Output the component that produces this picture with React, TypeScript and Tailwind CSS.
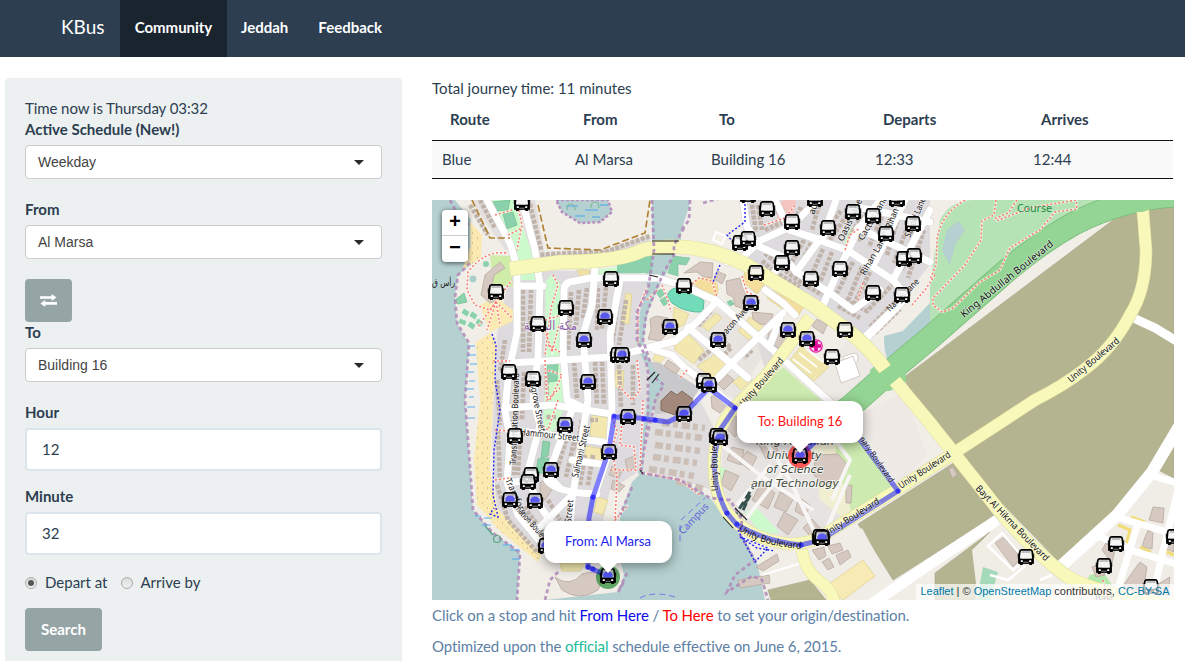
import React from "react";

type Stop = [number, number, number?];

const stops: Stop[] = [
  [522, 203], [496, 292], [611, 279], [566, 308], [538, 324], [605, 317, 1], [584, 340, 1],
  [618, 355], [622, 355, 1], [509, 372], [533, 379], [588, 382, 1], [628, 417, 1], [684, 414, 1],
  [565, 425, 1], [515, 436], [551, 470, 1], [531, 475], [528, 482], [510, 500, 1], [535, 501, 1],
  [609, 452, 1], [546, 546, 1], [608, 576, 1], [684, 286], [670, 327, 1], [718, 340, 1], [751, 303, 1],
  [756, 273], [704, 381], [709, 385, 1], [767, 209], [792, 222], [792, 248], [782, 263], [740, 243],
  [748, 239], [748, 195], [815, 199], [828, 228], [811, 279], [840, 269], [853, 212], [873, 216],
  [886, 234], [897, 199], [913, 224], [904, 259], [914, 256], [873, 293], [902, 295], [788, 330, 1],
  [807, 339, 1], [845, 330], [832, 357], [717, 436], [720, 438, 1], [800, 456, 1], [820, 537],
  [822, 538, 1], [1026, 557], [1116, 544], [1104, 566], [1174, 537], [1151, 587],
];

const whiteRoads = [
  "M487 200L510 243L517 267L517 333L509 370L505 410L510 440L507 482L518 515L552 556",
  "M522 200L535 250L540 285L538 357L533 400L540 425L527 475L537 502L558 532",
  "M517 286H543", "M563 350L564 290Q564 282 575 281L590 278L657 278L684 286L717 301L763 341L830 402",
  "M563 350L567 400L588 410", "M595 268L592 305L583 335L588 400L580 450L572 500L569 550",
  "M620 280L610 335L612 410L609 452L595 494", "M510 363L610 357L640 350L675 341L697 322L715 303",
  "M505 408L553 405L612 414", "M513 430L603 442", "M547 480Q556 493 597 494", "M508 483L530 480",
  "M570 497L537 530", "M572 410L548 475L560 488", "M688 327L748 378",
  "M655 350L672 355L684 367L712 388L735 408", "M783 313L735 360L697 400",
  "M600 464L572 460", "M765 290L783 303L795 315", "M770 345L780 320",
  "M743 200L747 227L760 247L783 257L797 272L830 293L853 310L880 290",
  "M757 242L790 227L813 205", "M790 230L847 250L893 280L907 297L863 342", "M823 305L840 267L858 230L880 200",
  "M758 243L742 258L727 262", "M783 258L770 280", "M857 207L930 222", "M858 228L930 262", "M930 210L893 280", "M905 200L875 262",
  "M775 200L790 230", "M867 335L903 300", "M790 230L822 240L836 200", "M796 272L818 242",
];

const houses = [
  "M523 290L523 352", "M531 289L529 352", "M571 292L568 350", "M579 290L576 325", "M587 288L583 318",
  "M598 288L597 330", "M606 287L602 330", "M546 370L547 395", "M574 362L577 398", "M595 362L597 405",
  "M602 362L604 405", "M516 378L517 420", "M524 372L522 420", "M497 380L500 425", "M498 430L500 480", "M497 485L508 520L538 553",
  "M515 445L514 475", "M520 440L518 475", "M556 417L545 417", "M566 440L557 470", "M574 442L566 477",
  "M582 420L577 450", "M590 420L598 420", "M585 455L580 485", "M593 455L588 485", "M524 507L545 535",
  "M518 505L522 515L536 533", "M548 500L560 520", "M470 205L488 235", "M480 200L495 228",
  "M530 204L541 250", "M535 255L570 253L605 252L650 236", "M618 300L612 345", "M626 300L619 345", "M619 365L621 408", "M633 365L633 405",
  "M505 340L500 372",
  "M770 213L785 210", "M765 230L785 221", "M801 207L795 219", "M804 240L792 262", "M811 243L801 264",
  "M823 249L808 283", "M832 252L818 287", "M845 258L829 288", "M853 262L837 293", "M862 267L848 300",
  "M870 272L854 304", "M847 215L830 240", "M841 211L822 235", "M862 215L849 238", "M870 218L858 242",
  "M884 212L869 247", "M893 212L878 252", "M899 215L887 255", "M908 225L894 263", "M916 228L902 270",
  "M924 230L908 278", "M765 253L777 264L800 282L822 295", "M762 261L775 272L800 287", "M838 306L860 318",
  "M845 300L867 311L895 282", "M870 327L895 302", "M875 333L900 309", "M758 205L762 230", "M752 205L756 232", "M819 205L812 230",
  "M711 311L698 326", "M714 347L699 360", "M752 350L744 358", "M729 312L740 321", "M723 341L731 348L722 357",
];

const campusBlocks = [
  "M655 432L702 438", "M655 445L700 451", "M653 457L697 463", "M649 469L694 476", "M662 423L705 428", "M676 481L703 489",
];

const parcels: { d: string; c: string }[] = [
  { d: "M716 313L722 318L708 331L702 326Z", c: "#f3e9b0" },
  { d: "M718 353L731 364L712 378L697 366Z", c: "#f3e9b0" },
  { d: "M675 335L688 334L704 350L694 364L675 350Z", c: "#f3e9b0" },
  { d: "M744 372L752 380L741 390L733 382Z", c: "#f3e9b0" },
  { d: "M592 415L610 418L607 440L590 437Z", c: "#f3e9b0" },
  { d: "M586 446L604 449L600 464L584 461Z", c: "#f3e9b0" },
  { d: "M626 293L632 294L629 324L621 324Z", c: "#f3e9b0" },
  { d: "M616 370L624 371L623 388L614 387Z", c: "#f3e9b0" },
  { d: "M597 497L608 500L603 515L594 512Z", c: "#f3e9b0" },
  { d: "M577 270L590 270L588 279L580 276Z", c: "#f3e0a5" },
  { d: "M746 263L767 282L757 294L743 282Z", c: "#f5dd9c" },
  { d: "M693 283Q698 276 710 278Q721 283 717 295L712 298Z", c: "#f5dd9c" },
  { d: "M674 307L689 314L684 325L672 330Z", c: "#f3e9b0" },
  { d: "M772 290L803 307L797 319L767 298Z", c: "#f5dd9c" },
  { d: "M656 351L667 355L660 363L653 360Z", c: "#f3e9b0" },
  { d: "M801 346L829 367L814 381L789 361Z", c: "#f0e6ad" },
  { d: "M750 317L764 327L749 340L738 331Z", c: "#f3e9b0" },
  { d: "M863 560L875 576L843 600L826 586Z", c: "#f8eab5" },
  { d: "M560 563H585L580 571H562Z", c: "#f3e9b0" },
];

const buildings = [
  "M684 273L700 262L713 263L712 278L702 276L697 272Z", "M726 281L740 278L742 287L748 299L744 309L735 306L733 297L727 294Z",
  "M717 271L726 275L722 284L714 279Z", "M752 312L773 314L770 325L760 324L753 319Z", "M817 319L827 325L823 334L812 326Z",
  "M650 319L656 316L668 318L671 330L660 341L648 339L651 330Z",
  "M500 262L485 275L481 295L490 303L496 301L491 290L494 275L505 268Z",
  "M768 330L783 330L789 340L778 348L768 341Z", "M540 483L551 476L555 485L545 500L540 497Z",
  "M711 397L721 392L729 402L720 413L712 408Z", "M735 416L745 424L735 437L726 428Z", "M747 419L757 426L752 436L743 430Z",
  "M732 447L744 450L741 465L727 460Z", "M747 451L757 457L750 470L739 462Z", "M758 443L770 438L778 450L766 459Z",
  "M725 470L739 476L731 491L721 484Z", "M761 483L775 493L768 509L752 500Z", "M780 492L794 498L786 512L774 507Z",
  "M784 512L798 520L788 535L777 526Z", "M799 497L811 506L804 516L795 511Z", "M803 528L812 519L820 528L812 538Z",
  "M815 455L838 454L849 467L839 482L823 485L814 475Z", "M846 486L852 485L851 503L846 503Z",
  "M812 550L824 547L826 556L819 560ZM828 546L840 543L843 550L832 554ZM836 555L848 550L851 557L840 565ZM822 562L829 558L834 567L828 570Z",
  "M756 567L777 554L779 561L763 571Z", "M738 580L769 575L770 583L740 588Z",
  "M555 577Q570 588 582 574Q597 569 604 578L598 590Q580 602 562 590Z",
  "M995 543L1004 537L1021 558L1013 567Z", "M1149 520L1153 507L1164 508L1163 523Z", "M1144 540L1148 530L1153 533L1152 549L1142 547Z",
  "M1125 583L1134 570L1140 562L1147 567L1142 600H1121Z", "M1102 550L1107 541L1116 546L1112 563Z", "M1092 567L1100 564L1105 575L1096 577Z",
  "M1160 583L1170 577L1168 595H1157Z", "M1163 538H1174V552L1161 547Z", "M949 469L953 467L957 475L952 478Z",
  "M625 460L636 455L634 468L628 472Z", "M612 466L622 471L619 478L609 475Z", "M613 480L625 486L619 492L611 489Z",
  "M668 360L680 368L676 374L664 366Z", "M727 374L734 380L724 390L718 384Z",
];

const redDots = [
  "M506 253Q485 250 468 272L467 290L475 305L490 310L512 280", "M496 302L477 328", "M496 302L487 330", "M496 302L500 325", "M496 302L512 318",
  "M518 206L522 225L517 250", "M495 215L512 210", "M508 235L522 228", "M553 275L558 285L551 308L545 355", "M545 320L562 315",
  "M545 330L552 352L559 325", "M548 345L560 352", "M545 360L547 400L560 388", "M550 400L562 375L548 370", "M558 400L548 430L542 425",
  "M646 290L638 310L638 343", "M662 285L668 300L671 312", "M657 290L647 300", "M637 360L640 390L632 400L618 385",
  "M493 361L510 361", "M495 430L535 432", "M495 480L509 478", "M612 418L617 430L612 450L617 478", "M622 422L620 445L634 447L636 470L611 470",
  "M643 400L640 470", "M643 473L680 480L700 495", "M617 480L615 520L628 505", "M692 284L699 278L712 281L717 297",
  "M742 276L747 292L760 298", "M764 225L785 218L795 205", "M845 250L850 235L860 228", "M863 283L858 300", "M687 370L680 378",
  "M965 200Q940 215 937 240L936 265L930 280", "M996 200L994 215L982 221L981 240L965 265L933 298L933 305L942 312L953 308L980 282L1000 270L1010 248L1040 230L1055 212L1077 209L1076 200L1030 208L996 221",
  "M1017 200L1008 213L994 219", "M1103 580L1108 600", "M935 275L925 290L912 305",
];

function Label({ x, y, a, w, s = 9.5, children }: { x: number; y: number; a: number; w: number; s?: number; children: string }) {
  return (
    <text
      transform={`translate(${x} ${y}) rotate(${a})`}
      fontSize={s}
      textLength={w}
      lengthAdjust="spacingAndGlyphs"
      fill="#111"
      stroke="#fff"
      strokeOpacity={0.45}
      strokeWidth={1.6}
      paintOrder="stroke"
    >
      {children}
    </text>
  );
}

function Bus({ x, y, blue }: { x: number; y: number; blue: boolean }) {
  return (
    <g transform={`translate(${x - 8} ${y - 8})`}>
      <path d="M3.2 1H12.8L14.5 9.5H1.5Z" fill={blue ? "#c9c9e8" : "#f4f4f4"} fillOpacity={blue ? 0.6 : 0.85} />
      <path d="M3.5 1.6H12.5V4H3.5Z" fill="#aaa" fillOpacity=".7" />
      {blue && <path d="M3.4 9.5V6.5Q4.6 3.4 8 3.4Q11.4 3.4 12.6 6.5V9.5Z" fill="#4444f5" fillOpacity=".85" />}
      <path d="M3.5 .9H12.5Q14 1 14.3 3L14.9 9V14H1.1V9L1.7 3Q2 1 3.5 .9Z" fill="none" stroke="#000" strokeWidth="1.7" />
      <path d="M.3 9.2Q8 10.2 15.7 9.2V14.5H14.1V16H11.2V14.5H4.8V16H1.9V14.5H.3Z" fill="#000" />
      <path d="M2.8 11.3H4.8V12.9H2.8ZM11.2 11.3H13.2V12.9H11.2Z" fill="#fff" />
      <path d="M5.4 13.2H10.6" stroke="#bbb" strokeWidth=".7" />
      <path d="M.3 4.5V9M15.7 4.5V9" stroke="#000" strokeWidth="1" />
    </g>
  );
}

function MapDrawing() {
  const unity = "M1142 200L1146 250Q1146 290 1130 315Q1113 348 1085 369Q1063 386 1035 400L957 451L898 489L827 533Q812 544 790 544Q754 540 733 519Q714 500 714 467Q714 428 735 407L765 377L810 317";
  const main = "M510 269L560 262Q620 262 643 250Q660 246 680 247Q710 248 745 264L813 305L847 330Q868 346 885 369";
  const mainEast = "M895 381L930 423L997 508Q1030 548 1065 575Q1090 592 1174 606";
  const trunk = "M1190 195Q1130 195 1075 223Q1035 245 995 281L930 338L887 374L850 407L830 420";
  const route = "M608 576L588 567L588 528L589 518L593 497L609 450L614 417L640 418L668 422L684 414L709 388L735 408L720 430L714 458Q714 490 727 513L737 525Q765 541 801 545L821 540L898 491L858 437L828 430L800 456";
  return (
    <svg viewBox="432 200 742 400" width="742" height="400" className="block" fontFamily="'Noto Sans', sans-serif">
      <defs>
        <pattern id="sand" width="10" height="10" patternUnits="userSpaceOnUse">
          <rect width="10" height="10" fill="#fbe9b2" />
          <path d="M2 3h1M7 8h1" stroke="#b8a06a" strokeWidth="1" />
        </pattern>
      </defs>
      <rect x="432" y="200" width="742" height="400" fill="#b5d0d0" />
      <path d="M455 200H652V248L640 300L643 350L655 400L641 473L632 482L622 510L615 540L624 575L618 592L545 600H517L520 553L493 533L473 510L470 467L465 400L469 345L457 323L455 295L458 275L470 265L471 220Z" fill="#f1eee8" />
      <path d="M676 240H700Q718 215 745 200H1174V600H765L757 562L745 540L727 520L710 498L680 480L641 473L655 400L643 345L650 290Z" fill="#f1eee8" />
      <path d="M691 200H745L744 230L727 258L681 244V232Z" fill="#f1eee8" />
      <path d="M497 335L510 270L640 272L650 290L640 310L645 345L655 400L641 470L610 490L594 560L552 562L497 512L492 440Z" fill="#dedbde" />
      <path d="M470 200H535L545 255L505 250Z" fill="#e4e0df" />
      <path d="M742 200H930V265L868 340L813 300L745 258Z" fill="#dedbde" />
      <path d="M643 400L700 400L715 430L712 490L680 480L641 473Z" fill="#dfdddd" />
      <path d="M648 361L660 363L700 388L684 412L655 414Z" fill="#c9c8ca" />
      <path d="M684 335L712 305L770 345L735 400L700 375Z" fill="#e8e5e0" />
      <path d="M758 345L783 322L800 340L765 370Z" fill="#e0dbdb" />
      <path d="M535 254L600 252L650 235V243L600 260L535 263Z" fill="#dedbde" />
      <path d="M470 222L482 235L481 258L462 270L471 245Z" fill="url(#sand)" />
      <path d="M476 342L490 333L497 345L493 400L490 470L497 508L541 555L538 562L500 531L477 505L474 460L480 400Z" fill="url(#sand)" />
      <path d="M480 305L496 297L514 311L513 321L490 332Z" fill="#fbe9b2" />
      <path d="M491 200H513L533 255L537 280H521L515 250Z" fill="#cdfacd" />
      <path d="M545 282L551 275L561 284L563 400L567 402L550 440L543 425L546 360Z" fill="#cdfacd" />
      <path d="M597 270L618 267L614 278H597Z" fill="#cdfacd" />
      <path d="M617 265L654 254L653 273L617 273Z" fill="#8bd1ab" />
      <path d="M490 255L510 256L513 287L493 285Z" fill="#cfeca8" />
      <path d="M492 202L510 200L508 210L497 211ZM503 214L513 212L517 225L507 229ZM547 364L558 363L557 381L548 382ZM543 441L550 442L548 456L541 458ZM538 459L549 458L545 474L536 472ZM455 300L464 293L467 302L458 304Z" fill="#8bd1ab" stroke="#70bd93" strokeWidth=".7" />
      <path d="M464 308l6 4-3 5-6-4zM472 311l6 4-3 5-6-4zM460 318l7 3-2 5-7-3zM470 321l6 4-3 5-6-4zM478 318l6 4-3 5-6-4z" fill="#8bd1ab" stroke="#fff" strokeWidth=".5" />
      <circle cx="486" cy="264" r="3" fill="#8bd1ab" />
      <circle cx="473" cy="279" r="3.4" fill="#a8cfc8" />
      <path d="M556 200H608L612 212L600 222L580 223L562 212Z" fill="#b5d0d0" stroke="#b78fc0" strokeWidth="2.5" strokeDasharray="3 2" />
      <path d="M566 206h12M585 210h13M575 216h10M592 217h8M600 205h8" stroke="#3aa0f0" strokeWidth=".9" />
      <path d="M567 210q0-6 4-6t4 6M591 208q0-6 4-6t4 6" fill="none" stroke="#7fb89b" strokeWidth="1.2" />
      <path d="M667 296Q669 288 680 287L692 291L704 301L703 312Q685 313 672 303Z" fill="#72dcba" stroke="#5bb999" />
      <path d="M673 256L690 258L686 265L678 264V276L668 273ZM656 292l5-3 4 5-5 4zM660 300l5-3 4 5-5 4zM727 302l4-2 3 4-4 2z" fill="#8bd1ab" stroke="#70bd93" strokeWidth=".6" />
      <path d="M760 238L770 233L771 238L763 243ZM852 302L860 301L857 306Z" fill="#cdf5cd" />
      <path d="M843 245L850 228L862 225L855 238Z" fill="#d6efc0" />
      <path d="M777 205L784 200H796L794 213L777 220Z" fill="#f5c5c0" />

      <path d="M930 335V285Q937 235 940 220Q950 200 975 200H1120L1050 235Z" fill="#b5e3b5" />
      <path d="M947 230L958 221L965 230L955 245L950 265L942 250Z" fill="#b4d0d0" />
      <path d="M884 336L903 331L930 303V338L905 362L890 361Q884 358 884 336Z" fill="#b5d0d0" />

      <path d="M722 425L745 408L810 425L848 448L851 515L825 530L790 540L750 528L722 500Z" fill="#e6e3e1" />
      <path d="M813 445L840 430L862 447L892 488L845 519L820 500Z" fill="#f1efd2" />
      <path d="M745 402L783 367L830 408L835 425L745 425Z" fill="#cdebb0" />
      <path d="M836 432L862 443L893 487L852 514L845 490L836 470Z" fill="#cdebb0" />
      <path d="M745 512L757 508L780 533L760 533ZM720 466L737 475L733 486L719 482Z" fill="#cdfacd" />
      <path d="M850 420L904 392L927 455L897 484Z" fill="#eee9e5" />
      <path d="M847 340L890 376L850 412L833 400L812 385Z" fill="#edeae6" />

      <g fill="#b5b491" stroke="#a8a68c" strokeWidth=".6">
        <path d="M903 378L1125 211L1174 207V432L1150 473L1117 517L1060 563L957 457Z" />
        <path d="M955 462L994 516L893 580L858 524Z" />
        <path d="M768 590L810 580L826 600H771Z" />
        <path d="M935 573L990 532L972 550L983 560L975 600H935Z" />
        <path d="M1158 470L1174 445V478Z" />
      </g>
      <path d="M862 528L890 580L862 597L830 600L810 560L835 545Z" fill="#f0ede7" />
      <path d="M972 550L996 528L1050 575L1048 600H978Z" fill="#f0ede5" />
      <path d="M1066 567L1117 521L1152 480L1174 483V600H1105L1078 582Z" fill="#f0ede6" />
      <path d="M983 567L998 572L990 600H977Z" fill="#8bd1ab" opacity=".75" />
      <path d="M1090 575L1103 572L1112 585L1108 600L1087 580Z" fill="#b5e8ac" />

      {parcels.map((p) => <path key={p.d} d={p.d} fill={p.c} stroke="#d9cb83" strokeWidth=".6" />)}
      <g fill="none" stroke="#c0b3aa" strokeWidth="4.6" strokeDasharray="4 1.4">
        {houses.map((d) => <path key={d} d={d} />)}
      </g>
      <g fill="none" stroke="#cbbfb8" strokeWidth="6.5" strokeDasharray="8 3 5 4">
        {campusBlocks.map((d) => <path key={d} d={d} />)}
      </g>
      <g fill="#d5c9c2" stroke="#b9aaa0" strokeWidth=".8">
        {buildings.map((d) => <path key={d} d={d} />)}
      </g>
      <path d="M661 401L671 391L677 395L682 391L694 400L685 412L675 415L661 410Z" fill="#a2897c" stroke="#83695d" />
      <g fill="none" stroke="#f8f6f4" strokeWidth="4" strokeLinejoin="round">
        <path d="M735 412L760 432L790 480L815 533M722 445L760 475L813 510M745 520L800 450L825 415M737 505L770 465M850 475L826 530M832 500L850 460L835 440M790 415L810 437" />
      </g>
      <path d="M806 349l17 13M799 353l18 14M793 359l18 14" stroke="#fff" strokeWidth="1.6" />
      <path d="M842 357L854 353Q860 354 857 363M835 363L853 356L860 376L841 383Z" fill="#fff" stroke="#cfcac5" strokeWidth="1" />
      <path d="M716 232l10 4-4 8-9-4z" fill="#f5f0e5" stroke="#fff" strokeWidth="2" />
      <path d="M733 519L753 487M738 521L750 495M743 505l8-9" stroke="#36524e" strokeWidth="3" strokeDasharray="8 4" />
      <path d="M988 546L1002 533L1025 560L1013 570ZM990 575L1008 580L1025 566M1040 580L1052 575" fill="none" stroke="#fff" strokeWidth="2.5" />
      <path d="M1118 525L1130 530L1126 545L1115 538M1131 517l14 5M1140 547l11 5M1160 549l14 6" fill="none" stroke="#f1dc78" strokeWidth="3" />
      <path d="M762 575L805 562M760 545L802 550" stroke="#fff" strokeWidth="2" />
      <path d="M652 200H680L676 250L667 272L657 290L648 312L643 342L650 362L665 385L656 397L652 410L646 430L642 474L638 474L643 430L648 400L650 372L642 358L636 342L640 312L648 290L652 272Z" fill="#b5d0d0" />

      <g fill="none" stroke="#d3d0d0" strokeWidth="8" strokeLinecap="round" strokeLinejoin="round">
        {whiteRoads.map((d) => <path key={d} d={d} />)}
      </g>
      <g fill="none" stroke="#fff" strokeWidth="7" strokeLinecap="round" strokeLinejoin="round">
        {whiteRoads.map((d) => <path key={d} d={d} />)}
      </g>
      <g fill="none" stroke="#fff">
        <path d="M860 612L930 564L997 520" strokeWidth="11" />
        <path d="M1180 425L1152 472L1117 515L1060 567" strokeWidth="12" />
        <path d="M1127 315L1155 328L1180 343" strokeWidth="9" />
        <path d="M1153 476L1180 484M1120 518L1180 536M1137 526L1113 605M1130 550L1180 565M1097 536L1130 548M1178 490L1162 555L1152 600" strokeWidth="7" />
      </g>
      <path d={trunk} fill="none" stroke="#78bb78" strokeWidth="24" />
      <path d="M870 370Q876 366 876 360L905 360Q906 372 906 382L890 391Q880 390 872 398Z" fill="#94d494" />
      <path d={trunk} fill="none" stroke="#94d494" strokeWidth="22.5" />
      <path d="M802 550Q805 570 818 580Q833 590 835 605" fill="none" stroke="#e3e1a5" strokeWidth="12" />
      <path d="M802 550Q805 570 818 580Q833 590 835 605" fill="none" stroke="#f8f8ba" strokeWidth="11" />
      <path d={unity} fill="none" stroke="#dddda0" strokeWidth="12.6" />
      <path d={main} fill="none" stroke="#dddda0" strokeWidth="14.6" />
      <path d={mainEast} fill="none" stroke="#dddda0" strokeWidth="13.6" />
      <path d={unity} fill="none" stroke="#f8f8ba" strokeWidth="11.4" />
      <path d={main} fill="none" stroke="#f8f8ba" strokeWidth="13.6" />
      <path d={mainEast} fill="none" stroke="#f8f8ba" strokeWidth="12.6" />
      <path d="M1125 200H1155Q1152 213 1137 212Q1128 212 1125 207Z" fill="#94d494" />

      <g fill="none" stroke="#fff" strokeWidth="2.6" strokeOpacity=".6">{redDots.map((d) => <path key={d} d={d} />)}</g>
      <g fill="none" stroke="#fb7a6b" strokeWidth="1.5" strokeDasharray="2 2">{redDots.map((d) => <path key={d} d={d} />)}</g>
      <path d="M472 200L490 238L510 238M538 205L548 248L600 250L645 233L650 200" fill="none" stroke="#ae8030" strokeWidth="1.6" strokeDasharray="7 3" />
      <g fill="none" stroke="#b08abb" strokeWidth="2.8" strokeDasharray="4 3" opacity=".85">
        <path d="M450 200L458 215L469 225M470 263L458 275L455 297L457 323L469 343L465 400L470 467L473 510L493 533L520 553L517 600" />
        <path d="M652 200L654 250L648 290L637 312L637 340L645 355L648 372L648 420L641 472" />
        <path d="M684 228L674 245L674 255L664 272L655 292L646 315L643 340L650 362" />
        <path d="M690 200L689 220L680 232M703 203L720 198M655 378L664 385L656 397L652 415L645 445" />
        <path d="M641 473L680 480L710 498L730 500L742 520L740 535L755 560L735 575L727 592L752 576L762 580L768 600" />
        <path d="M632 487L620 515M627 573L618 592L625 580M545 600L550 580L560 570" />
      </g>
      <g fill="none" stroke="#2222f5" strokeWidth="1.4" strokeDasharray="2 2">
        <path d="M492 334L496 345L495 380L500 410L494 450L493 495L498 517L490 514L494 508" />
        <path d="M745 200V222L727 235L733 242M720 265L713 282" />
        <path d="M738 530L755 562L768 548L740 537L757 548L775 551" />
      </g>
      <path d="M640 598Q655 590 678 598M681 520L705 498M680 525v20" fill="none" stroke="#7777e8" strokeWidth="1" strokeDasharray="6 4" />
      <g stroke="#45a5f0" strokeWidth=".9">
        <path d="M469 346h6M468 355h8M470 364h7M467 372h7M469 381h6M466 389h8M469 397h5M467 407h8M468 418h7M475 516h6M484 518h8M482 525h9M503 545h9M510 550h10M512 559h8" />
      </g>
      <path d="M647 380l8-8M652 383l7-9M652 241h27M652 254h22M649 275l9 2M723 517l10 11M735 508l12 12M640 470l3 4" stroke="#222" strokeWidth="1.1" />
      <g fill="none" stroke="#5ba583" strokeWidth="1.2">
        <circle cx="497" cy="539" r="3.5" /><path d="M485 526l8 9" />
      </g>

      <g fill="#8a5fa5" fontSize="13" fontFamily="'DejaVu Sans', sans-serif">
        <text x="524" y="330" textLength="53" lengthAdjust="spacingAndGlyphs" stroke="#fff" strokeOpacity=".6" strokeWidth="1.5" paintOrder="stroke">مكة المدينة</text>
      </g>
      <text x="432" y="286" fontSize="10" fill="#222" textLength="23" lengthAdjust="spacingAndGlyphs" fontFamily="'DejaVu Sans', sans-serif">رأس ق</text>
      <text x="1017" y="212" fontSize="11" fill="#268a48" textLength="35" lengthAdjust="spacingAndGlyphs">Course</text>
      <Label x={964} y={318} a={-39} w={116} s={10}>King Abdullah Boulevard</Label>
      <Label x={1071} y={383} a={-40} w={64}>Unity Boulevard</Label>
      <Label x={975} y={489} a={46} w={101}>Bayt Al Hikma Boulevard</Label>
      <Label x={901} y={489} a={-33} w={60}>Unity Boulevard</Label>
      <Label x={744} y={407} a={-49} w={61}>Unity Boulevard</Label>
      <Label x={721} y={341} a={-48} w={53}>Beacon Avenue</Label>
      <Label x={843} y={242} a={-65} w={46} s={9}>Oasis Lane</Label>
      <Label x={863} y={241} a={-60} w={50} s={9}>Cactus Lane</Label>
      <Label x={865} y={276} a={-60} w={46} s={9}>Rihan Lane</Label>
      <Label x={891} y={229} a={-68} w={40} s={9}>Rihan Lane</Label>
      <Label x={910} y={238} a={-68} w={42} s={9}>Sahool Lane</Label>
      <Label x={890} y={312} a={-45} w={42} s={9}>Nargis Lane</Label>
      <Label x={814} y={215} a={-70} w={22} s={9}>aurel</Label>
      <Label x={520} y={435} a={6} w={59}>Hammour Street</Label>
      <Label x={578} y={478} a={-77} w={53}>Salmani Street</Label>
      <Label x={571} y={523} a={-84} w={23} s={9}>Street</Label>
      <Label x={516} y={465} a={-88} w={92} s={9}>Transformation Boulevard</Label>
      <Label x={528} y={373} a={79} w={60} s={9}>Musgrove Street</Label>
      <Label x={505} y={480} a={65} w={42} s={9}>Transform</Label>
      <Label x={514} y={508} a={48} w={53} s={9}>mation Boulevard</Label>
      <text transform="translate(683 535) rotate(-47)" fontSize="10" fill="#6363d8">Campus</text>

      <g fontSize="11" fontStyle="italic" fill="#3f4a3b" textAnchor="middle" fontFamily="'DejaVu Sans', sans-serif" stroke="#fff" strokeOpacity=".65" strokeWidth="2" paintOrder="stroke">
        <text x="795" y="445" textLength="78" lengthAdjust="spacingAndGlyphs">King Abdullah</text>
        <text x="794" y="459" textLength="55" lengthAdjust="spacingAndGlyphs">University</text>
        <text x="795" y="473" textLength="57" lengthAdjust="spacingAndGlyphs">of Science</text>
        <text x="795" y="487" textLength="88" lengthAdjust="spacingAndGlyphs">and Technology</text>
      </g>
      <circle cx="816" cy="346" r="6.2" fill="#fbd5ef" stroke="#e0189c" strokeWidth="1.3" />
      <path d="M814.2 341h3.6v3.2h3.2v3.6h-3.2v3.2h-3.6v-3.2H811v-3.6h3.2z" fill="#df0c98" />

      <circle cx="608" cy="577" r="12" fill="#168020" fillOpacity=".65" />
      <circle cx="800" cy="456" r="12" fill="#f33" fillOpacity=".8" />
      <path d={route} fill="none" stroke="#00f" strokeOpacity=".5" strokeWidth="5" strokeLinejoin="round" strokeLinecap="round" />
      <g fill="#1515ff" fillOpacity=".7">
        {[[614, 416], [644, 419], [655, 420], [593, 497], [588, 567], [593, 569], [735, 408], [737, 524], [727, 513], [801, 545], [898, 491]].map(([x, y]) => <circle key={`${x}-${y}`} cx={x} cy={y} r="2.6" />)}
      </g>
      <Label x={718} y={491} a={-91} w={61}>Unity Boulevard</Label>
      <text fontSize="9.5" fill="#111"><textPath href="#unity-south" textLength="67" lengthAdjust="spacingAndGlyphs">Unity Boulevard</textPath></text>
      <path id="unity-south" d="M738 530Q762 547 805 549" fill="none" />
      <Label x={826} y={537} a={-32} w={64}>Unity Boulevard</Label>
      <Label x={859} y={439} a={55} w={54} s={8.5}>nary Boulevard</Label>
      {stops.map(([x, y, b], i) => <Bus key={i} x={x} y={y} blue={!!b} />)}
      <text x="1095" y="601" fontSize="9" fill="#555">Bayt</text>
    </svg>
  );
}

function Select({ value }: { value: string }) {
  return (
    <div className="flex h-[34px] items-center justify-between rounded border border-[#ccc] bg-white pl-3 pr-[17px] font-['Liberation_Sans',sans-serif] text-[14px] text-[#444]">
      <span>{value}</span>
      <svg width="10" height="5" viewBox="0 0 10 5"><path d="M0 0H10L5 5Z" fill="#2b2b2b" /></svg>
    </div>
  );
}

function Field({ label, value }: { label: string; value: string }) {
  return (
    <div className="mb-[15px]">
      <div className="mb-[5px] h-[21px] font-bold leading-[21px]">{label}</div>
      <div className="flex h-[43px] items-center rounded border-2 border-[#dce4ec] bg-white px-[15px]">{value}</div>
    </div>
  );
}

function Radio({ checked }: { checked?: boolean }) {
  return (
    <span className="flex h-3 w-3 items-center justify-center rounded-full border border-[#aaa] bg-gradient-to-b from-[#dcdcdc] to-[#f1f1f1]">
      {checked && <span className="h-[6px] w-[6px] rounded-full bg-[#555]" />}
    </span>
  );
}

function Popup({ text, className }: { text: string; className: string }) {
  return (
    <div className={`absolute flex h-[42px] items-center justify-center rounded-xl bg-white text-[13px] shadow-[0_3px_12px_rgba(0,0,0,0.4)] ${className}`}>
      {text}
      <svg className="absolute left-1/2 top-[41px] -ml-[10px]" width="20" height="12" viewBox="0 0 20 12"><path d="M0 0H20L10 11Z" fill="#fff" /></svg>
    </div>
  );
}

export default function App() {
  return (
    <div className="h-[661px] w-[1185px] overflow-hidden bg-white font-[Lato,sans-serif] text-[15px] text-[#2c3e50]">
      <nav className="flex h-[57px] items-center bg-[#2c3e50] pb-[3px] pl-[61px] font-bold text-white">
        <span className="w-[59px] text-[19px] font-normal">KBus</span>
        <span className="-mb-[3px] flex h-[57px] w-[107px] items-center justify-center bg-[#1a242f] pb-[3px] tracking-[-0.03px]">Community</span>
        <span className="pl-[14px]">Jeddah</span>
        <span className="pl-[30px]">Feedback</span>
      </nav>
      <div className="flex gap-[30px] pl-[5px] pt-[21px]">
        <aside className="h-[620px] w-[397px] rounded bg-[#ecf0f1] px-5 pt-5">
          <div className="h-[21px] leading-[21px] tracking-[-0.08px]">Time now is Thursday 03:32</div>
          <div className="mb-[5px] h-[21px] font-bold leading-[21px]">Active Schedule (New!)</div>
          <Select value="Weekday" />
          <div className="mb-[5px] mt-5 h-[21px] font-bold leading-[21px]">From</div>
          <Select value="Al Marsa" />
          <div className="mt-5 flex h-[43px] w-[47px] items-center justify-center rounded bg-[#95a5a6]">
            <svg width="17" height="13" viewBox="0 0 17 13" fill="#fff"><path d="M0 2.3H11.6V0L16.5 3.6L11.6 7V4.8H0ZM17 8.1H5.3V5.9L.4 9.4L5.3 13V10.7H17Z" /></svg>
          </div>
          <div className="mb-[5px] h-[21px] font-bold leading-[21px]">To</div>
          <Select value="Building 16" />
          <div className="h-5" />
          <Field label="Hour" value="12" />
          <Field label="Minute" value="32" />
          <div className="flex h-[25px] items-center">
            <Radio checked />
            <span className="ml-2 mr-[13px]">Depart at</span>
            <Radio />
            <span className="ml-2">Arrive by</span>
          </div>
          <div className="mt-[13px] flex h-[43px] w-[77px] items-center justify-center rounded bg-[#95a5a6] font-bold text-white">Search</div>
        </aside>
        <main className="w-[742px]">
          <div className="h-[21px] leading-[21px]">Total journey time: 11 minutes</div>
          <table className="w-[741px] table-fixed border-collapse text-left">
            <colgroup>
              <col className="w-[133px]" /><col className="w-[136px]" /><col className="w-[164px]" /><col className="w-[158px]" /><col className="w-[150px]" />
            </colgroup>
            <thead>
              <tr className="h-[41px] border-b border-[#111]">
                {["Route", "From", "To", "Departs", "Arrives"].map((h) => <th key={h} className="p-0 pl-[18px] font-bold">{h}</th>)}
              </tr>
            </thead>
            <tbody>
              <tr className="h-[38px] border-b border-[#111] bg-[#f9f9f9]">
                {["Blue", "Al Marsa", "Building 16", "12:33", "12:44"].map((c) => <td key={c} className="p-0 pl-[10px]">{c}</td>)}
              </tr>
            </tbody>
          </table>
          <div className="relative mt-[21px] h-[400px] w-[742px] overflow-hidden">
            <MapDrawing />
            <div className="absolute left-[10px] top-[10px] w-[26px] overflow-hidden rounded bg-white text-center font-['Liberation_Mono',monospace] text-[20px] font-bold leading-[26px] text-black shadow-[0_1px_5px_rgba(0,0,0,0.65)]">
              <div className="h-[26px] border-b border-[#ccc]">+</div>
              <div className="h-[26px]">−</div>
            </div>
            <Popup text="To: Building 16" className="left-[305px] top-[201px] w-[126px] text-[#f11]" />
            <Popup text="From: Al Marsa" className="left-[112px] top-[321px] w-[128px] text-[#22e]" />
            <div className="absolute bottom-0 right-0 flex h-4 w-[258px] items-center justify-center whitespace-pre bg-white/70 font-['Liberation_Sans',sans-serif] text-[11px] text-[#333]">
              <span className="text-[#0078a8]">Leaflet</span> | © <span className="text-[#0078a8]">OpenStreetMap</span> contributors, <span className="text-[#0078a8]">CC-BY-SA</span>
            </div>
          </div>
          <p className="mt-[5px] h-[21px] leading-[21px] tracking-[-0.085px] text-[#5d80a6]">
            Click on a stop and hit <span className="text-[#0b0bec]">From Here</span> / <span className="text-[#f00]">To Here</span> to set your origin/destination.
          </p>
          <p className="mt-[10px] h-[21px] leading-[21px] tracking-[-0.1px] text-[#5d80a6]">
            Optimized upon the <span className="text-[#18bc9c]">official</span> schedule effective on June 6, 2015.
          </p>
        </main>
      </div>
    </div>
  );
}
